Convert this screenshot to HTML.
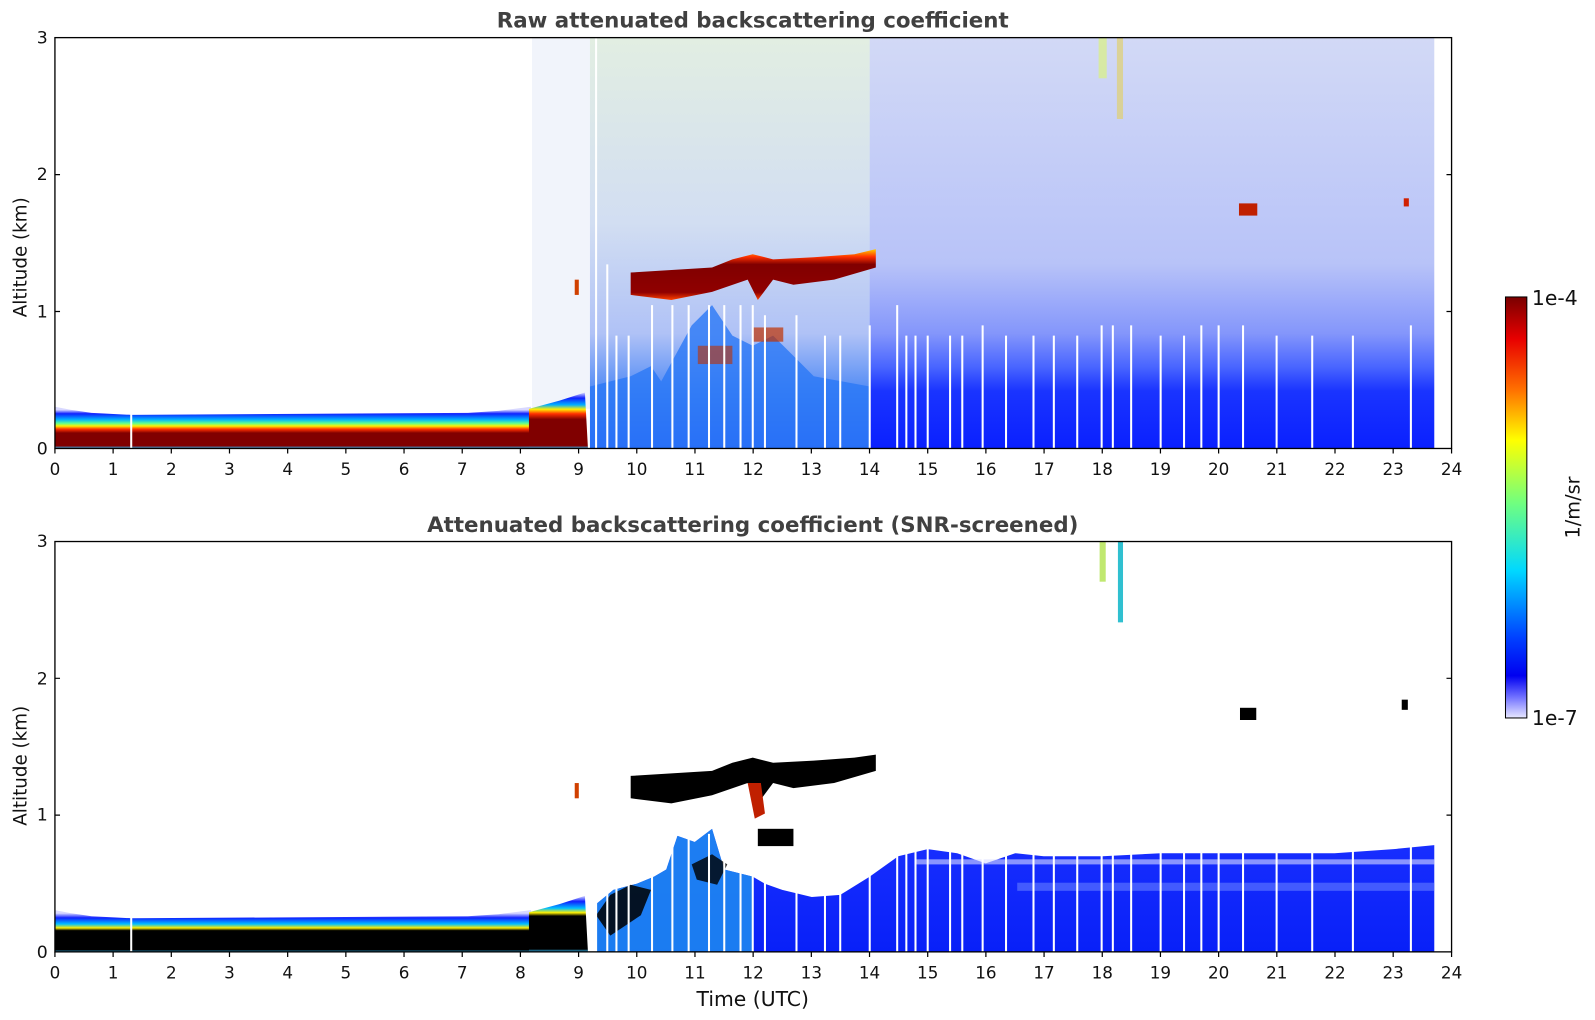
<!DOCTYPE html>
<html><head><meta charset="utf-8"><style>
html,body{margin:0;padding:0;background:#fff;}
svg{display:block;}
text{font-family:"DejaVu Sans","Liberation Sans",sans-serif;fill:#111;}
</style></head><body>
<svg width="1595" height="1020" viewBox="0 0 1568 1003" preserveAspectRatio="none" xmlns="http://www.w3.org/2000/svg">
<defs>
<linearGradient id="band" gradientUnits="userSpaceOnUse" x1="0" y1="403" x2="0" y2="441">
<stop offset="0" stop-color="#d8d8ff"/><stop offset="0.1" stop-color="#1020ff"/><stop offset="0.25" stop-color="#00b0ff"/><stop offset="0.35" stop-color="#60ff90"/><stop offset="0.42" stop-color="#ffee00"/><stop offset="0.5" stop-color="#ff3000"/><stop offset="0.6" stop-color="#800000"/><stop offset="0.93" stop-color="#800000"/><stop offset="1" stop-color="#30c0ff"/>
</linearGradient>
<linearGradient id="bandR" x1="0" y1="0" x2="0" y2="1">
<stop offset="0" stop-color="#d8d8ff"/><stop offset="0.1" stop-color="#1020ff"/><stop offset="0.22" stop-color="#00b0ff"/><stop offset="0.3" stop-color="#ffee00"/><stop offset="0.38" stop-color="#ff3000"/><stop offset="0.48" stop-color="#800000"/><stop offset="0.95" stop-color="#800000"/><stop offset="1" stop-color="#30c0ff"/>
</linearGradient>
<linearGradient id="band2" gradientUnits="userSpaceOnUse" x1="0" y1="898" x2="0" y2="936">
<stop offset="0" stop-color="#d8d8ff"/><stop offset="0.12" stop-color="#1020ff"/><stop offset="0.28" stop-color="#00c0ff"/><stop offset="0.38" stop-color="#ffee00"/><stop offset="0.45" stop-color="#000"/><stop offset="0.95" stop-color="#000"/><stop offset="1" stop-color="#30c0ff"/>
</linearGradient>
<linearGradient id="band2R" x1="0" y1="0" x2="0" y2="1">
<stop offset="0" stop-color="#d8d8ff"/><stop offset="0.1" stop-color="#1020ff"/><stop offset="0.22" stop-color="#00c0ff"/><stop offset="0.3" stop-color="#ffee00"/><stop offset="0.36" stop-color="#000"/><stop offset="0.95" stop-color="#000"/><stop offset="1" stop-color="#30c0ff"/>
</linearGradient>
<linearGradient id="cloud" x1="0" y1="0" x2="0" y2="1">
<stop offset="0" stop-color="#ffd000"/><stop offset="0.15" stop-color="#ff3000"/><stop offset="0.3" stop-color="#800000"/><stop offset="0.85" stop-color="#900000"/><stop offset="1" stop-color="#ff4000"/>
</linearGradient>
<linearGradient id="cb" x1="0" y1="0" x2="0" y2="1">
<stop offset="0" stop-color="#7a0000"/><stop offset="0.1" stop-color="#e80000"/><stop offset="0.22" stop-color="#ff7000"/><stop offset="0.34" stop-color="#ffff00"/><stop offset="0.49" stop-color="#70ff80"/><stop offset="0.65" stop-color="#00d8ff"/><stop offset="0.81" stop-color="#0040ff"/><stop offset="0.9" stop-color="#0000f0"/><stop offset="0.95" stop-color="#7070ff"/><stop offset="1" stop-color="#e8e8ff"/>
</linearGradient>
<linearGradient id="noise" x1="0" y1="0" x2="0" y2="1">
<stop offset="0" stop-color="#d2d9f6"/><stop offset="0.55" stop-color="#b8c3f8"/><stop offset="0.72" stop-color="#8496fb"/><stop offset="0.8" stop-color="#4a66ff"/><stop offset="0.86" stop-color="#1a34ff"/><stop offset="1" stop-color="#0a20ff"/>
</linearGradient>
<linearGradient id="noiseL" x1="0" y1="0" x2="0" y2="1">
<stop offset="0" stop-color="#e2eee2"/><stop offset="0.45" stop-color="#d2def2"/><stop offset="0.72" stop-color="#b0c2f6"/><stop offset="0.87" stop-color="#4c88f5"/><stop offset="1" stop-color="#2050f8"/>
</linearGradient>
<linearGradient id="blueB" x1="0" y1="0" x2="0" y2="1">
<stop offset="0" stop-color="#1a30ff"/><stop offset="1" stop-color="#0820f8"/>
</linearGradient>
</defs>

<!-- ===== TOP PLOT ===== -->
<text x="740" y="27" text-anchor="middle" font-size="21" font-weight="bold" style="fill:#404040">Raw attenuated backscattering coefficient</text>
<rect x="523" y="37" width="58" height="365" fill="#f1f4fb"/>
<rect x="580" y="37" width="830" height="404" fill="url(#noise)"/>
<rect x="580" y="37" width="275" height="404" fill="url(#noiseL)"/>
<polygon points="54,400 70,403 90,406 130,408 460,406 490,404 522,400 522,441 54,441" fill="url(#band)"/>
<polygon points="520,402 550,394 575,386 578,441 520,441" fill="url(#bandR)"/>
<polygon points="580,380 620,370 640,360 650,375 680,320 700,300 720,330 740,340 760,330 780,350 800,370 855,380 855,441 580,441" fill="#2a78f6" opacity="0.8"/>
<polygon points="620,268 700,263 720,255 740,250 760,255 800,253 840,250 861,245 861,263 820,275 780,280 760,275 745,295 735,275 700,287 660,295 620,290" fill="url(#cloud)"/>
<rect x="740" y="322" width="30" height="14" fill="#c03000" opacity="0.7"/>
<rect x="686" y="340" width="34" height="18" fill="#c03000" opacity="0.6"/>
<rect x="565" y="275" width="4" height="15" fill="#d04000"/>
<rect x="1218" y="200" width="18" height="12" fill="#c02000"/>
<rect x="1380" y="195" width="5" height="8" fill="#d02000"/>
<rect x="1080" y="37" width="8" height="40" fill="#d8ee90" opacity="0.8"/>
<rect x="1098" y="37" width="6" height="80" fill="#e0d070" opacity="0.7"/>
<g stroke="#fff" stroke-width="2">
<path d="M586 441V37M597 441V260M606 441V330M618 441V330M641 441V300M661 441V300M677 441V300M697 441V300M712 441V300M728 441V300M740 441V300M752 441V310M783 441V310M811 441V330M826 441V330M855 441V320M882 441V300M891 441V330M900 441V330M912 441V330M934 441V330M946 441V330M966 441V320M989 441V330M1016 441V330M1036 441V330M1059 441V330M1083 441V320M1094 441V320M1112 441V320M1141 441V330M1164 441V330M1181 441V320M1198 441V320M1222 441V320M1255 441V330M1290 441V330M1330 441V330M1387 441V320M129 441V405"/>
</g>
<rect x="54" y="37" width="1373" height="404" fill="none" stroke="#000" stroke-width="1.3"/>

<!-- ===== BOTTOM PLOT ===== -->
<text x="740" y="523" text-anchor="middle" font-size="21" font-weight="bold" style="fill:#404040">Attenuated backscattering coefficient (SNR-screened)</text>
<polygon points="54,895 70,898 90,901 130,903 460,901 490,899 522,895 522,936 54,936" fill="url(#band2)"/>
<polygon points="520,897 550,889 575,881 578,936 520,936" fill="url(#band2R)"/>
<polygon points="586,889 603,875 626,869 643,862 655,855 666,822 683,828 700,815 712,855 740,862 752,869 769,875 798,882 826,880 855,862 883,842 912,835 941,839 969,849 998,839 1026,842 1084,842 1141,839 1198,839 1255,839 1312,839 1370,835 1410,831 1410,936 586,936" fill="url(#blueB)"/>
<polygon points="586,889 603,875 626,869 643,862 655,855 666,822 683,828 700,815 712,855 740,862 740,936 586,936" fill="#1e8cf0" opacity="0.85"/>
<polygon points="586,900 600,880 620,870 640,875 630,900 600,920" fill="#000" opacity="0.85"/>
<polygon points="680,850 700,840 715,850 705,870 685,865" fill="#000" opacity="0.8"/>
<rect x="1000" y="868" width="410" height="8" fill="#5870ff" opacity="0.7"/>
<rect x="900" y="845" width="510" height="5" fill="#d8dcff" opacity="0.6"/>
<polygon points="620,763 700,758 720,750 740,745 760,750 800,748 840,745 861,742 861,758 820,770 780,775 760,770 745,790 735,770 700,782 660,790 620,785" fill="#000"/>
<polygon points="735,770 748,770 752,800 742,805" fill="#c02000"/>
<rect x="745" y="815" width="35" height="17" fill="#000"/>
<rect x="565" y="770" width="4" height="15" fill="#d04000"/>
<rect x="1219" y="696" width="16" height="12" fill="#000"/>
<rect x="1378" y="688" width="6" height="10" fill="#000"/>
<rect x="1081" y="532" width="6" height="40" fill="#c0e870"/>
<rect x="1099" y="532" width="5" height="80" fill="#30c0d0"/>
<g stroke="#fff" stroke-width="2">
<path d="M586 936V860M597 936V860M606 936V860M618 936V860M641 936V840M661 936V820M677 936V820M697 936V820M712 936V840M728 936V840M740 936V840M752 936V850M783 936V860M811 936V860M826 936V860M855 936V850M882 936V830M891 936V830M900 936V830M912 936V830M934 936V830M946 936V830M966 936V830M989 936V830M1016 936V830M1036 936V830M1059 936V830M1083 936V830M1094 936V830M1112 936V830M1141 936V830M1164 936V830M1181 936V830M1198 936V830M1222 936V830M1255 936V830M1290 936V830M1330 936V830M1387 936V830M129 936V900"/>
</g>
<rect x="54" y="532.5" width="1373" height="403.5" fill="none" stroke="#000" stroke-width="1.3"/>

<!-- ticks -->
<g stroke="#000" stroke-width="1.2">
<path d="M54 441v5M111.2 441v5M168.4 441v5M225.6 441v5M282.8 441v5M340 441v5M397.2 441v5M454.4 441v5M511.6 441v5M568.8 441v5M626 441v5M683.2 441v5M740.4 441v5M797.6 441v5M854.8 441v5M912 441v5M969.2 441v5M1026.4 441v5M1083.6 441v5M1140.8 441v5M1198 441v5M1255.2 441v5M1312.4 441v5M1369.6 441v5M1427 441v5"/>
<path d="M54 936v5M111.2 936v5M168.4 936v5M225.6 936v5M282.8 936v5M340 936v5M397.2 936v5M454.4 936v5M511.6 936v5M568.8 936v5M626 936v5M683.2 936v5M740.4 936v5M797.6 936v5M854.8 936v5M912 936v5M969.2 936v5M1026.4 936v5M1083.6 936v5M1140.8 936v5M1198 936v5M1255.2 936v5M1312.4 936v5M1369.6 936v5M1427 936v5"/>
<path d="M54 306.3h5M54 171.7h5M1427 306.3h-5M1427 171.7h-5M54 801.5h5M54 667h5M1427 801.5h-5M1427 667h-5"/>
</g>
<g font-size="16.5" text-anchor="middle">
<text x="54" y="467">0</text><text x="111.2" y="467">1</text><text x="168.4" y="467">2</text><text x="225.6" y="467">3</text><text x="282.8" y="467">4</text><text x="340" y="467">5</text><text x="397.2" y="467">6</text><text x="454.4" y="467">7</text><text x="511.6" y="467">8</text><text x="568.8" y="467">9</text><text x="626" y="467">10</text><text x="683.2" y="467">11</text><text x="740.4" y="467">12</text><text x="797.6" y="467">13</text><text x="854.8" y="467">14</text><text x="912" y="467">15</text><text x="969.2" y="467">16</text><text x="1026.4" y="467">17</text><text x="1083.6" y="467">18</text><text x="1140.8" y="467">19</text><text x="1198" y="467">20</text><text x="1255.2" y="467">21</text><text x="1312.4" y="467">22</text><text x="1369.6" y="467">23</text><text x="1427" y="467">24</text>
<text x="54" y="962">0</text><text x="111.2" y="962">1</text><text x="168.4" y="962">2</text><text x="225.6" y="962">3</text><text x="282.8" y="962">4</text><text x="340" y="962">5</text><text x="397.2" y="962">6</text><text x="454.4" y="962">7</text><text x="511.6" y="962">8</text><text x="568.8" y="962">9</text><text x="626" y="962">10</text><text x="683.2" y="962">11</text><text x="740.4" y="962">12</text><text x="797.6" y="962">13</text><text x="854.8" y="962">14</text><text x="912" y="962">15</text><text x="969.2" y="962">16</text><text x="1026.4" y="962">17</text><text x="1083.6" y="962">18</text><text x="1140.8" y="962">19</text><text x="1198" y="962">20</text><text x="1255.2" y="962">21</text><text x="1312.4" y="962">22</text><text x="1369.6" y="962">23</text><text x="1427" y="962">24</text>
</g>
<g font-size="17" text-anchor="end">
<text x="47" y="447">0</text><text x="47" y="312">1</text><text x="47" y="177">2</text><text x="47" y="43">3</text>
<text x="47" y="942">0</text><text x="47" y="807">1</text><text x="47" y="673">2</text><text x="47" y="538">3</text>
</g>
<text transform="translate(26,253) rotate(-90)" text-anchor="middle" font-size="18">Altitude (km)</text>
<text transform="translate(26,753) rotate(-90)" text-anchor="middle" font-size="18">Altitude (km)</text>
<text x="740" y="989" text-anchor="middle" font-size="20">Time (UTC)</text>

<!-- colorbar -->
<rect x="1480" y="292" width="21" height="414" fill="url(#cb)" stroke="#000" stroke-width="1"/>
<text x="1506" y="300" font-size="20">1e-4</text>
<text x="1506" y="713" font-size="20">1e-7</text>
<text transform="translate(1553,499) rotate(-90)" text-anchor="middle" font-size="19">1/m/sr</text>
</svg>
</body></html>
